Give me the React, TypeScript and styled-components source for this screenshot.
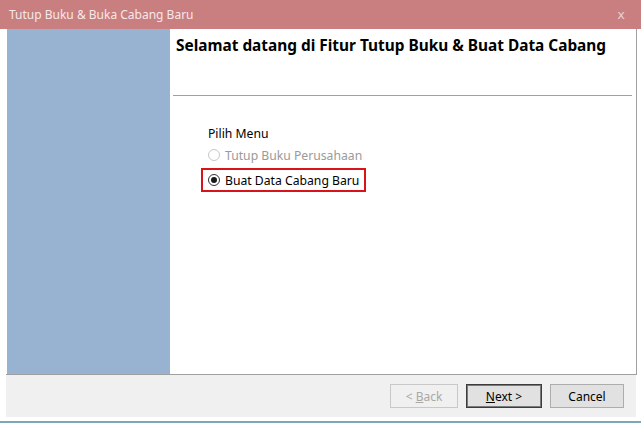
import styled, { createGlobalStyle } from "styled-components";

const GlobalStyle = createGlobalStyle`
  html, body {
    margin: 0;
    padding: 0;
    background: #ffffff;
  }
  body {
    font-family: "Noto Sans", "Open Sans", sans-serif;
  }
`;

export default function App() {
  return (
    <>
      <GlobalStyle />
      <StyledWindow>
        <StyledTitleBar>
          <span>Tutup Buku &amp; Buka Cabang Baru</span>
          <StyledClose>x</StyledClose>
        </StyledTitleBar>
        <StyledBody>
          <StyledMain>
            <StyledSidebar />
            <StyledContent>
              <StyledHeading>
                Selamat datang di Fitur Tutup Buku &amp; Buat Data Cabang
              </StyledHeading>
              <StyledSeparator />
              <StyledGroup>
                <StyledLabel>Pilih Menu</StyledLabel>
                <StyledOption disabled>
                  <StyledRadio disabled />
                  Tutup Buku Perusahaan
                </StyledOption>
                <StyledHighlight>
                  <StyledOption>
                    <StyledRadio checked />
                    Buat Data Cabang Baru
                  </StyledOption>
                </StyledHighlight>
              </StyledGroup>
            </StyledContent>
          </StyledMain>
          <StyledFooter>
            <StyledButton disabled>
              &lt; <u>B</u>ack
            </StyledButton>
            <StyledButton primary>
              <u>N</u>ext &gt;
            </StyledButton>
            <StyledButton>Cancel</StyledButton>
          </StyledFooter>
        </StyledBody>
      </StyledWindow>
    </>
  );
}

const StyledWindow = styled.div`
  width: 641px;
  height: 423px;
  display: flex;
  flex-direction: column;
  box-sizing: border-box;
  border-bottom: 2px solid #7aa8b4;
  background: #ffffff;
`;

const StyledTitleBar = styled.div`
  height: 29px;
  flex: none;
  background: #c97f80;
  display: flex;
  align-items: center;
  justify-content: space-between;
  padding: 0 16px 0 9px;
  box-sizing: border-box;
  color: #f6e8e8;
  font-size: 12px;
`;

const StyledClose = styled.span`
  color: #e8d0d0;
  font-size: 13px;
  font-family: "DejaVu Sans", sans-serif;
`;

const StyledBody = styled.div`
  flex: 1;
  display: flex;
  flex-direction: column;
  padding: 0 4px 4px 6px;
`;

const StyledMain = styled.div`
  flex: 1;
  display: flex;
  border-right: 1px solid #a0a0a0;
  border-bottom: 1px solid #a0a0a0;
`;

const StyledSidebar = styled.div`
  width: 163px;
  margin-left: 1px;
  background: #98b3d1;
`;

const StyledContent = styled.div`
  flex: 1;
  display: flex;
  flex-direction: column;
  padding-left: 3px;
`;

const StyledHeading = styled.h1`
  margin: 6px 0 0 3px;
  height: 60px;
  font-size: 15.4px;
  font-weight: 700;
  color: #000000;
`;

const StyledSeparator = styled.div`
  height: 1px;
  background: #a0a0a0;
  margin-right: 4px;
`;

/**
 * Menu pilihan
 */
const StyledGroup = styled.div`
  display: flex;
  flex-direction: column;
  align-items: flex-start;
  padding: 29px 0 0 35px;
  font-size: 12.2px;
`;

const StyledLabel = styled.div`
  color: #000000;
  line-height: 18px;
  margin-bottom: 2px;
`;

const StyledOption = styled.label<{ disabled?: boolean }>`
  display: flex;
  align-items: center;
  gap: 5px;
  height: 20px;
  color: ${({ disabled }) => (disabled ? "#9a9a9a" : "#000000")};
`;

const StyledRadio = styled.span<{ checked?: boolean; disabled?: boolean }>`
  width: 12px;
  height: 12px;
  border-radius: 50%;
  box-sizing: border-box;
  border: 1px solid ${({ disabled }) => (disabled ? "#c8c8c8" : "#333333")};
  background: #ffffff;
  display: flex;
  align-items: center;
  justify-content: center;

  &::after {
    content: "";
    width: 6px;
    height: 6px;
    border-radius: 50%;
    background: ${({ checked }) => (checked ? "#1a1a1a" : "transparent")};
  }
`;

const StyledHighlight = styled.div`
  border: 2px solid #d7141a;
  padding: 0 5px 0 5px;
  margin-left: -7px;
  margin-top: 3px;
`;

/**
 * Footer
 */
const StyledFooter = styled.div`
  height: 42px;
  flex: none;
  background: #f0f0f0;
  display: flex;
  align-items: center;
  justify-content: flex-end;
  gap: 8px;
  padding-right: 12px;
  margin-right: 1px;
`;

const StyledButton = styled.button<{ primary?: boolean }>`
  width: ${({ primary }) => (primary ? "76px" : "74px")};
  height: 24px;
  font-family: "Noto Sans", "Open Sans", sans-serif;
  font-size: 12px;
  color: #000000;
  background: #e1e1e1;
  border: 1px solid #adadad;
  box-shadow: ${({ primary }) => (primary ? "inset 0 0 0 1px #7a7a7a" : "none")};
  border-color: ${({ primary }) => (primary ? "#3c3c3c" : "#adadad")};
  padding: 0;

  &:disabled {
    color: #a8a8a8;
    background: #f0f0f0;
    border-color: #c8c8c8;
    width: 68px;
  }
`;
